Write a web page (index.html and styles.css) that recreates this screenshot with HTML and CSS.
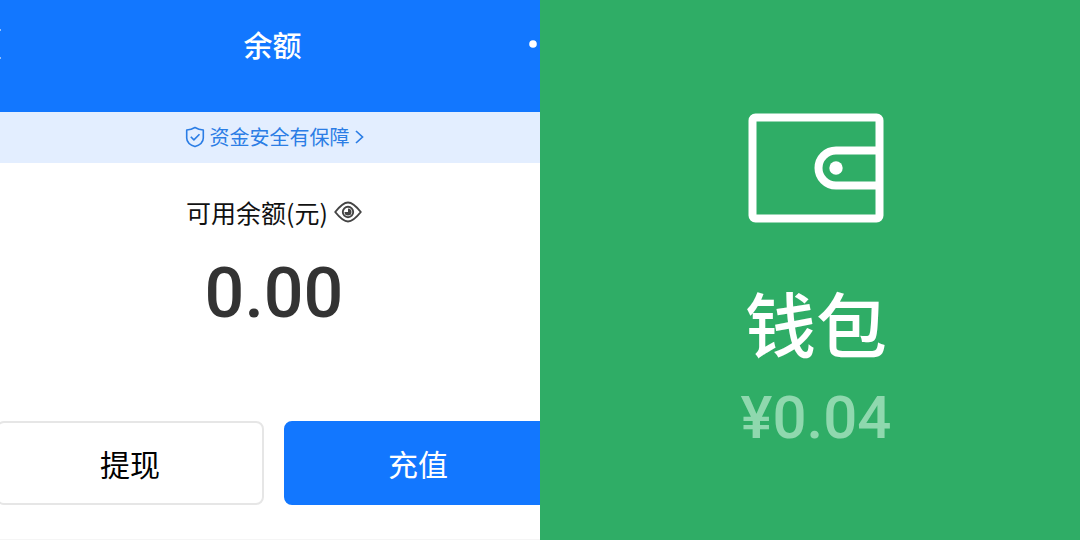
FILE: index.html
```html
<!DOCTYPE html>
<html lang="zh-CN">
<head>
<meta charset="utf-8">
<meta name="viewport" content="width=device-width, initial-scale=1">
<title>余额</title>
<link rel="stylesheet" href="styles.css">
</head>
<body>
<main class="panels">
  <section class="balance">
    <div class="screen">
      <header class="topbar">
        <button class="back" type="button" aria-label="返回"><svg width="20" height="34" viewBox="0 0 20 34" fill="none" stroke="currentColor" stroke-width="3"><path d="M18 2 3 17l15 15"/></svg></button>
        <h1 class="title">余额</h1>
        <button class="more" type="button" aria-label="更多"><svg width="34" height="8" viewBox="0 0 34 8" fill="currentColor"><circle cx="4" cy="4" r="3.800"/><circle cx="17" cy="4" r="3.800"/><circle cx="30" cy="4" r="3.800"/></svg></button>
      </header>
      <a class="notice" href="#safety">
        <svg width="20" height="22" viewBox="0 0 20 22" fill="none" stroke="currentColor" stroke-width="1.6" stroke-linejoin="round"><path d="M10 1.500C7.500 3 4.800 3.800 1.700 4v8c0 4.200 3.500 7 8.300 8.600 4.800-1.600 8.300-4.400 8.300-8.600V4C15.200 3.800 12.500 3 10 1.500Z"/><path d="m5.800 10.800 3.100 3.100 5.600-5.700"/></svg>
        <span>资金安全有保障</span>
        <svg width="9" height="14" viewBox="0 0 9 14" fill="none" stroke="currentColor" stroke-width="1.700"><path d="m1 1 6.500 6L1 13"/></svg>
      </a>
      <div class="summary">
        <div class="label">
          <span>可用余额(元)</span>
          <button class="eye" type="button" aria-label="隐藏余额"><svg width="28" height="22" viewBox="0 0 28 22" fill="none" stroke="currentColor" stroke-width="1.900" stroke-linejoin="round"><path d="M1.200 11C6 5 10 1.500 14 1.500S22 5 26.800 11C22 17 18 20.500 14 20.500S6 17 1.200 11Z"/><circle cx="14" cy="11" r="5.200"/><path d="M14 7.500V11h-3.500A3.500 3.500 0 1 0 14 7.500Z" fill="currentColor" stroke="none"/></svg></button>
        </div>
        <p class="amount">0.00</p>
      </div>
      <div class="actions">
        <button class="action" type="button">提现</button>
        <button class="action primary" type="button">充值</button>
      </div>
    </div>
  </section>
  <section class="wallet">
    <svg width="136" height="110" viewBox="0 0 136 110" fill="none" stroke="currentColor" stroke-width="8"><rect x="4.500" y="4.500" width="127" height="101" rx="3"/><path d="M132 37.500H88a17.500 17.500 0 0 0 0 35h44"/><circle cx="88" cy="55" r="6.700" fill="currentColor" stroke="none"/></svg>
    <h2 class="wallet-name">钱包</h2>
    <p class="wallet-amount">¥0.04</p>
  </section>
</main>
</body>
</html>
```
FILE: styles.css
```css
* { box-sizing: border-box; }
body {
  margin: 0;
  font-family: "Noto Sans CJK SC", sans-serif;
  background: #fff;
}
h1, h2, p { margin: 0; }
button {
  padding: 0;
  border: 0;
  background: none;
  color: inherit;
  font: inherit;
}
svg { display: block; flex: none; }
.panels {
  display: grid;
  grid-template-columns: 1fr 1fr;
  min-height: 100vh;
}
.balance { overflow: hidden; }
.screen {
  display: flex;
  flex-direction: column;
  min-height: 100%;
  margin: 0 -12px 0 -4px;
  border-bottom: 2px solid #f5f5f5;
}
.topbar {
  display: grid;
  grid-template-columns: 1fr auto 1fr;
  align-items: center;
  padding: 18px 3px 42px 0;
  margin: 0 -14px;
  background: #1277ff;
  color: #fff;
}
.back { justify-self: start; }
.more { justify-self: end; }
.title {
  font-size: 29px;
  line-height: 52px;
  font-weight: 500;
}
.notice {
  display: flex;
  align-items: center;
  justify-content: center;
  gap: 5px;
  padding-bottom: 1px;
  background: #e3eeff;
  color: #2b7de5;
  font-size: 20px;
  line-height: 50px;
  text-decoration: none;
}
.summary {
  display: flex;
  flex-direction: column;
  align-items: center;
  padding-top: 29px;
}
.label {
  display: flex;
  align-items: center;
  gap: 6px;
  color: #111;
  font-size: 25px;
  line-height: 40px;
}
.eye { color: #444; }
.amount {
  padding-top: 21px;
  color: #333;
  font-family: Roboto, sans-serif;
  font-size: 70px;
  font-weight: 500;
  line-height: 80px;
}
.actions {
  display: grid;
  grid-template-columns: 1fr 1fr;
  gap: 20px;
  padding: 88px 0 34px;
}
.action {
  border: 2px solid #e6e6e6;
  border-radius: 8px;
  color: #000;
  font-size: 30px;
  line-height: 80px;
}
.primary {
  border-color: #1277ff;
  background: #1277ff;
  color: #fff;
}
.wallet {
  display: flex;
  flex-direction: column;
  align-items: center;
  padding-top: 113px;
  padding-left: 12px;
  background: #2fad66;
  color: #fff;
}
.wallet-name {
  padding-top: 48px;
  font-size: 71px;
  font-weight: 500;
  line-height: 100px;
}
.wallet-amount {
  padding-top: 12px;
  color: #8fd8ae;
  font-family: Roboto, sans-serif;
  font-size: 60px;
  font-weight: 500;
  line-height: 70px;
}
```
